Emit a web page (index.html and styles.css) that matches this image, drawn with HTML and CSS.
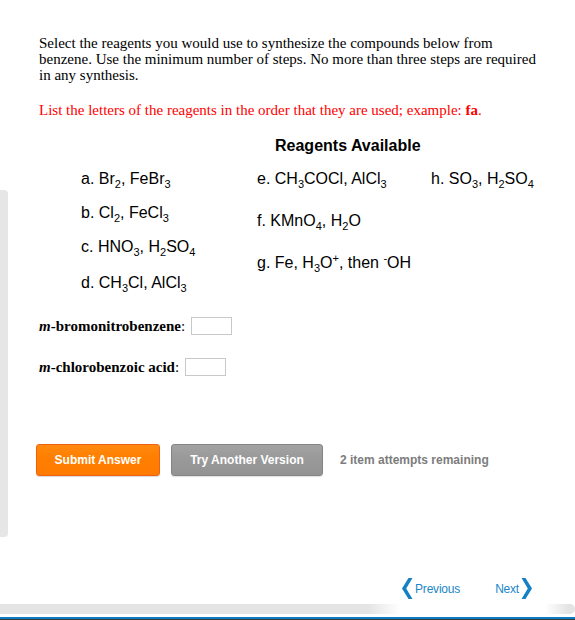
FILE: index.html
```html
<!DOCTYPE html>
<html>
<head>
<meta charset="utf-8">
<link rel="stylesheet" href="styles.css">
</head>
<body>
<div class="page">
  <div class="rail"></div>
  <div class="content">
    <p class="intro">Select the reagents you would use to synthesize the compounds below from benzene. Use the minimum number of steps. No more than three steps are required in any synthesis.</p>
    <p class="hint">List the letters of the reagents in the order that they are used; example: <b>fa</b>.</p>
    <div class="heading">Reagents Available</div>
    <div class="reagents">
      <div class="col col1">
        <div class="item">a. Br<sub>2</sub>, FeBr<sub>3</sub></div>
        <div class="item">b. Cl<sub>2</sub>, FeCl<sub>3</sub></div>
        <div class="item">c. HNO<sub>3</sub>, H<sub>2</sub>SO<sub>4</sub></div>
        <div class="item item-d">d. CH<sub>3</sub>Cl, AlCl<sub>3</sub></div>
      </div>
      <div class="col col2">
        <div class="item">e. CH<sub>3</sub>COCl, AlCl<sub>3</sub></div>
        <div class="item">f. KMnO<sub>4</sub>, H<sub>2</sub>O</div>
        <div class="item">g. Fe, H<sub>3</sub>O<sup>+</sup>, then <sup>-</sup>OH</div>
      </div>
      <div class="col col3">
        <div class="item">h. SO<sub>3</sub>, H<sub>2</sub>SO<sub>4</sub></div>
      </div>
    </div>
    <div class="answers">
      <div class="answer"><b><i>m</i>-bromonitrobenzene</b>: <span class="box"></span></div>
      <div class="answer"><b><i>m</i>-chlorobenzoic acid</b>: <span class="box"></span></div>
    </div>
    <div class="actions">
      <button class="btn btn-submit">Submit Answer</button>
      <button class="btn btn-try">Try Another Version</button>
      <span class="attempts">2 item attempts remaining</span>
    </div>
  </div>
</div>
<div class="nav">
  <a class="nav-link prev">
    <svg width="12" height="21" viewBox="0 0 12 21"><polygon points="7.5,0 11.5,0 5.2,10.5 11.5,21 7.5,21 1,10.5" fill="#1580c4"/></svg>
    <span>Previous</span>
  </a>
  <a class="nav-link next">
    <span>Next</span>
    <svg width="12" height="21" viewBox="0 0 12 21"><polygon points="4.5,0 0.5,0 6.8,10.5 0.5,21 4.5,21 11,10.5" fill="#1580c4"/></svg>
  </a>
</div>
<div class="scrollbar"></div>
<div class="bottom-blue"></div>
<div class="bottom-dark"></div>
</body>
</html>
```

FILE: styles.css
```css
html, body {
  margin: 0;
  padding: 0;
  background: #fff;
}
body {
  width: 575px;
  height: 620px;
  overflow: hidden;
  font-family: "Liberation Serif", "Times New Roman", serif;
  color: #000;
}
.page {
  display: flex;
  height: 537px;
}
.rail {
  flex: 0 0 8px;
  margin-top: 190px;
  height: 347px;
  background: #e6e6e6;
  border-radius: 0 4px 4px 0;
}
.content {
  padding: 35px 34px 0 31px;
  width: 502px;
}
.intro {
  margin: 0;
  font-size: 15px;
  line-height: 16px;
}
.hint {
  margin: 19px 0 0;
  font-size: 15px;
  line-height: 16px;
  color: #ff0000;
}
.heading {
  margin-top: 19px;
  padding-left: 236px;
  font-family: "Liberation Sans", Arial, sans-serif;
  font-weight: bold;
  font-size: 16px;
  line-height: 18px;
}
.reagents {
  display: grid;
  grid-template-columns: 176px 174px auto;
  padding-left: 42px;
  margin-top: 14px;
  font-family: "Liberation Sans", Arial, sans-serif;
  font-size: 16px;
}
.col {
  display: flex;
  flex-direction: column;
}
.col1 { gap: 14px; }
.col1 .item-d { margin-top: 2px; }
.col2 { gap: 22px; }
.item {
  line-height: 20px;
  height: 20px;
  white-space: nowrap;
}
.item sub {
  font-size: 11px;
  vertical-align: -4px;
  line-height: 0;
}
.item sup {
  font-size: 11px;
  vertical-align: 6px;
  line-height: 0;
}
.answers {
  margin-top: 23px;
  display: flex;
  flex-direction: column;
  gap: 21px;
}
.answer {
  display: flex;
  align-items: center;
  height: 20px;
  font-size: 15px;
  line-height: 16px;
  white-space: pre;
}
.box {
  display: inline-block;
  width: 39px;
  height: 16px;
  border: 1px solid #c8c8c8;
  margin-left: 2px;
}
.actions {
  margin: 67px 0 0 -3px;
  display: flex;
  align-items: center;
}
.btn {
  height: 32px;
  border-radius: 3px;
  font-family: "Liberation Sans", Arial, sans-serif;
  font-weight: bold;
  font-size: 12px;
  color: #fff;
  padding: 0;
  cursor: pointer;
}
.btn-submit {
  width: 124px;
  background: linear-gradient(#ff8a10, #ff7f00 40%, #ff7a00);
  border: 1px solid #f06010;
  box-shadow: 0 1px 1px rgba(0,0,0,0.15);
}
.btn-try {
  width: 152px;
  margin-left: 11px;
  background: linear-gradient(#a3a3a3, #9a9a9a 40%, #939393);
  border: 1px solid #858585;
  box-shadow: 0 1px 1px rgba(0,0,0,0.12);
}
.attempts {
  margin-left: 17px;
  font-family: "Liberation Sans", Arial, sans-serif;
  font-weight: bold;
  font-size: 12px;
  color: #7c7c7c;
}
.nav {
  display: flex;
  justify-content: flex-end;
  align-items: center;
  gap: 35px;
  margin-top: 41px;
  height: 21px;
  padding-right: 42px;
}
.nav-link {
  display: flex;
  align-items: center;
  gap: 2px;
  font-family: "Liberation Sans", Arial, sans-serif;
  font-size: 12px;
  color: #1b86c8;
  letter-spacing: -0.2px;
}
.nav-link svg { display: block; }
.scrollbar {
  margin-top: 5px;
  height: 10px;
  background: linear-gradient(to right, #e4e4e4 0, #e4e4e4 368px, #ffffff 400px, #ffffff 545px, #e4e4e4 568px);
  border-radius: 0 6px 6px 0;
}
.bottom-blue {
  margin-top: 3px;
  height: 2px;
  background: #0e7cc1;
}
.bottom-dark {
  height: 1px;
  background: #2f3a40;
}
```
